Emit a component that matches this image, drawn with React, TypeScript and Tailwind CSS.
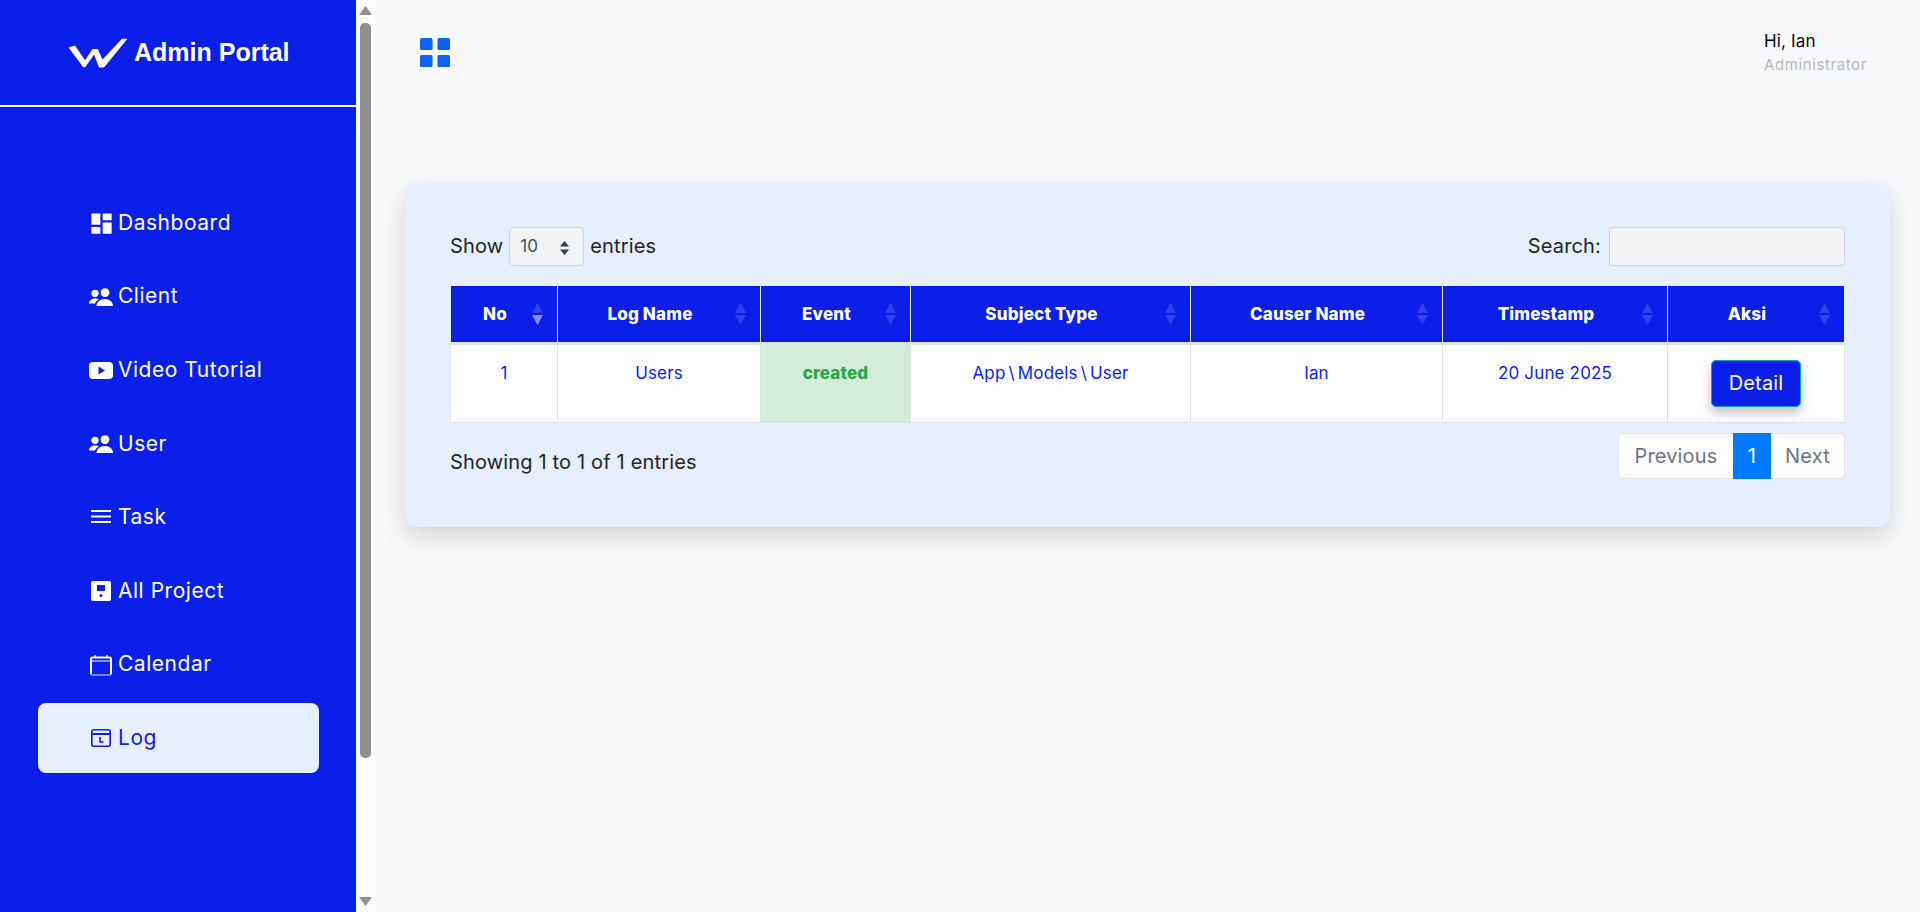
import { MdDashboard } from 'react-icons/md'
import type { ReactNode } from 'react'

const Calendar = () => (
  <svg className="shrink-0 mt-[2px]" width="22" height="21" viewBox="0 0 22 21" fill="none" stroke="currentColor" strokeWidth="2">
    <path d="M21 19V4a1.500 1.500 0 0 0-1.500-1.500h-17A1.500 1.500 0 0 0 1 4v15" />
    <path d="M1 19a1 1 0 0 0 1 1h18a1 1 0 0 0 1-1" strokeWidth="1.500" opacity="0.6" />
    <path d="M1 6h20" strokeWidth="1" />
    <path d="M5 0v3M17 0v3" strokeWidth="1.500" />
  </svg>
)

const LogIcon = () => (
  <svg className="shrink-0" width="20" height="18" viewBox="0 0 20 18" fill="none" stroke="currentColor" strokeWidth="1.600">
    <rect x="0.800" y="0.800" width="18.400" height="16.400" rx="2" />
    <path d="M1 5h18" strokeWidth="2" />
    <path d="M9 8v5h3.500" strokeWidth="1.600" />
  </svg>
)

const ProjectIcon = () => (
  <svg className="shrink-0" width="20" height="20" viewBox="0 0 20 20" fill="currentColor">
    <path fillRule="evenodd" d="M2 0h16a2 2 0 0 1 2 2v16a2 2 0 0 1-2 2H2a2 2 0 0 1-2-2V2a2 2 0 0 1 2-2zm4 4v6h8V4H6zm4 9a1.500 1.500 0 1 0 0 3 1.500 1.500 0 0 0 0-3z" />
  </svg>
)

const TaskIcon = () => (
  <svg className="shrink-0" width="20" height="14" viewBox="0 0 20 14" fill="currentColor">
    <rect y="0" width="20" height="2" />
    <rect y="5.500" width="20" height="2" />
    <rect y="11" width="20" height="2" />
  </svg>
)

const VideoIcon = () => (
  <svg className="shrink-0" width="24" height="17" viewBox="0 0 24 17" fill="currentColor">
    <path fillRule="evenodd" d="M4 0h16a4 4 0 0 1 4 4v9a4 4 0 0 1-4 4H4a4 4 0 0 1-4-4V4a4 4 0 0 1 4-4zm5.500 4.500v8l6.500-4z" />
  </svg>
)

const PeopleIcon = () => (
  <svg className="shrink-0" width="24" height="18" viewBox="0 0 24 18" fill="currentColor">
    <circle cx="16" cy="4.600" r="4.400" />
    <circle cx="6" cy="5.300" r="3.600" />
    <path d="M7.500 18c0-4 3.500-7 8.300-7s8.200 3 8.200 7z" />
    <path d="M0 15.500c0-3 3-5 6-5 1.500 0 3 .5 4 1-2 1-3.500 2.400-4 4z" />
  </svg>
)

const NAV: { label: string; icon: ReactNode; active?: boolean }[] = [
  { label: 'Dashboard', icon: <MdDashboard size={27} className="shrink-0" /> },
  { label: 'Client', icon: <PeopleIcon /> },
  { label: 'Video Tutorial', icon: <VideoIcon /> },
  { label: 'User', icon: <PeopleIcon /> },
  { label: 'Task', icon: <TaskIcon /> },
  { label: 'All Project', icon: <ProjectIcon /> },
  { label: 'Calendar', icon: <Calendar /> },
  { label: 'Log', icon: <LogIcon />, active: true },
]

const COLUMNS = [
  { label: 'No', width: 'w-[107px]', asc: true },
  { label: 'Log Name', width: 'w-[203px]' },
  { label: 'Event', width: 'w-[150px]' },
  { label: 'Subject Type', width: 'w-[280px]' },
  { label: 'Causer Name', width: 'w-[252px]' },
  { label: 'Timestamp', width: 'w-[225px]' },
  { label: 'Aksi', width: 'w-[177px]' },
]

function SortArrows({ asc }: { asc?: boolean }) {
  return (
    <svg className="absolute right-[14px] top-[17px]" width="11" height="22" viewBox="0 0 11 22">
      <path d="M5.500 0L11 10H0z" fill="#fff" opacity="0.15" />
      <path d="M5.500 22L0 12h11z" fill="#fff" opacity={asc ? 0.5 : 0.15} />
    </svg>
  )
}

function Sidebar() {
  return (
    <aside className="w-[356px] shrink-0 bg-[#0b1fe9] text-white">
      <div className="h-[107px] border-b-2 border-white flex items-start pl-[68px] pt-[38px] gap-[6px]">
        <svg width="60" height="30" viewBox="0 0 60 30" fill="#fff">
          <path d="M0.500 9.500L7 7.500 19 25 15.500 29.500z" />
          <path d="M13.500 27.500L24.500 11h5.500L17 29.500z" />
          <path d="M24.500 12.500L30 11.500 34.500 21.500 54 0.800H59.500L36 29.500h-5z" />
        </svg>
        <span className="font-['Liberation_Sans',sans-serif] font-bold text-[25px] leading-[29px]">Admin Portal</span>
      </div>
      <nav className="pt-[81px] pl-[38px] pr-[37px] flex flex-col gap-[3.6px]">
        {NAV.map(item => (
          <a
            key={item.label}
            className={`h-[70px] rounded-lg flex items-center pl-[51px] gap-[5px] text-[21px] tracking-[0.025em] ${item.active ? 'bg-[#e7eefc] text-[#0b1fe9]' : 'text-white'}`}
          >
            <span className="w-6 flex justify-center">{item.icon}</span>
            <span className="mb-[1px]">{item.label}</span>
          </a>
        ))}
      </nav>
    </aside>
  )
}

function FakeScrollbar() {
  return (
    <div className="w-[19px] shrink-0 bg-[#fbfbfb] flex flex-col items-center pt-[6px] pb-[6px] pl-[3px] pr-[4px]">
      <svg width="13" height="9" viewBox="0 0 13 9" fill="#8f8f8f"><path d="M6.500 0L13 9H0z" /></svg>
      <div className="w-[11px] h-[735px] rounded-[5px] bg-[#8f8f8f] mt-[8px]" />
      <svg className="mt-auto" width="13" height="9" viewBox="0 0 13 9" fill="#8f8f8f"><path d="M6.500 9L0 0h13z" /></svg>
    </div>
  )
}

function Topbar() {
  return (
    <div className="h-[183px] flex items-start justify-between pl-[45px] pr-[24px] pt-[38px]">
      <svg width="30" height="29" viewBox="0 0 30 29" fill="#0d61ff">
        <rect width="12.500" height="12" rx="1.500" />
        <rect x="17.500" width="12.500" height="12" rx="1.500" />
        <rect y="17" width="12.500" height="12" rx="1.500" />
        <rect x="17.500" y="17" width="12.500" height="12" rx="1.500" />
      </svg>
      <div className="mt-[-9px] w-[132px]">
        <div className="text-[17px] leading-[24px] text-[#05051e] tracking-[0.01em]">Hi, Ian</div>
        <div className="text-[15px] leading-[23px] text-[#b5b8c0] tracking-[0.04em]">Administrator</div>
      </div>
    </div>
  )
}

function LogTable() {
  return (
    <table className="w-full table-fixed border-collapse text-[17px] text-[#0b1fe9]">
      <thead>
        <tr className="bg-[#0b1fe9] text-white h-[57px] border-b-[3px] border-[#dee2e6]">
          {COLUMNS.map(col => (
            <th key={col.label} className={`${col.width} relative border-x border-[#e7eefc] pl-3 pr-[30px] pt-[2px] font-extrabold text-center text-[17px] tracking-[0.01em]`}>
              {col.label}
              <SortArrows asc={col.asc} />
            </th>
          ))}
        </tr>
      </thead>
      <tbody>
        <tr className="bg-white h-[79px]">
          <td className="border border-[#dee2e6] text-center align-top pt-[16px]">1</td>
          <td className="border border-[#dee2e6] text-center align-top pt-[16px]">Users</td>
          <td className="border border-[#dee2e6] text-center align-top pt-[16px] bg-[#d4edda] text-[#28a745] font-extrabold">created</td>
          <td className="border border-[#dee2e6] text-center align-top pt-[16px]">
            App<span className="mx-[3px]">\</span>Models<span className="mx-[3px]">\</span>User
          </td>
          <td className="border border-[#dee2e6] text-center align-top pt-[16px]">Ian</td>
          <td className="border border-[#dee2e6] text-center align-top pt-[16px]">20 June 2025</td>
          <td className="border border-[#dee2e6] text-center align-top pt-[15px]">
            <button className="w-[90px] h-[47px] rounded-[5px] bg-[#0b1fe9] border border-[#0aa5c0] text-white text-[20px] shadow-[0_6px_12px_rgba(0,0,0,0.25)]">Detail</button>
          </td>
        </tr>
      </tbody>
    </table>
  )
}

export default function App() {
  return (
    <div className="h-[912px] w-[1920px] flex overflow-hidden bg-[#f7f8fa] font-['Inter',sans-serif]">
      <Sidebar />
      <FakeScrollbar />
      <main className="flex-1 min-w-0">
        <Topbar />
        <div className="mx-[30px] h-[344px] rounded-xl bg-[#e7eefc] px-[45px] pt-[44px] shadow-[0_10px_24px_rgba(0,0,0,0.14)] text-[20px] tracking-[0.008em] text-[#212529]">
          <div className="flex items-center justify-between h-[39px]">
            <div className="flex items-center gap-[6px]">
              <span className="mb-[2px]">Show</span>
              <span className="relative">
                <select className="w-[75px] h-[39px] appearance-none rounded-[5px] border border-[#ced4da] bg-[#f2f3f5] pl-[10px] text-[17px] text-[#495057]">
                  <option>10</option>
                </select>
                <svg className="absolute right-[14px] top-[14px]" width="11" height="14" viewBox="0 0 11 14" fill="#343a40">
                  <path d="M5.500 0L10 5.500H1zM5.500 14L1 8.500h9z" />
                </svg>
              </span>
              <span className="mb-[2px]">entries</span>
            </div>
            <div className="flex items-center gap-[8px]">
              <span className="mb-[2px]">Search:</span>
              <input className="w-[236px] h-[39px] rounded-[4px] border border-[#ced4da] bg-[#f2f3f5]" />
            </div>
          </div>
          <div className="mt-[20px]">
            <LogTable />
          </div>
          <div className="flex items-start justify-between mt-[10px]">
            <span className="mt-[14px]">Showing 1 to 1 of 1 entries</span>
            <div className="flex h-[46px] items-stretch rounded-[5px] border border-[#dee2e6] bg-white text-[#6c757d]">
              <span className="w-[114px] flex items-center justify-center">Previous</span>
              <span className="w-[38px] my-[-1px] flex items-center justify-center bg-[#007bff] text-white">1</span>
              <span className="w-[73px] flex items-center justify-center">Next</span>
            </div>
          </div>
        </div>
      </main>
    </div>
  )
}
